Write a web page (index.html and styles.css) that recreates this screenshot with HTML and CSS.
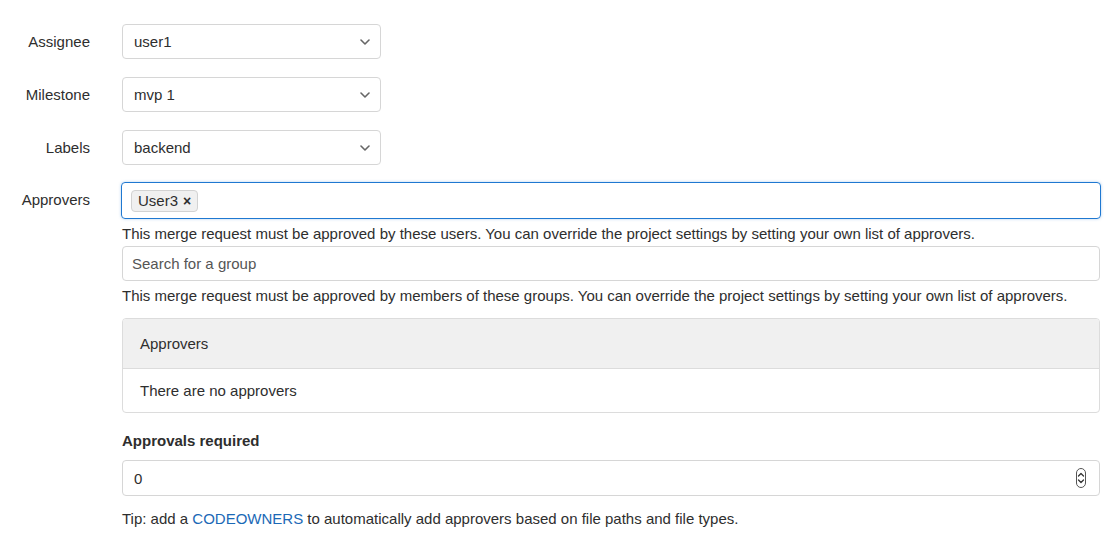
FILE: index.html
```html
<!DOCTYPE html>
<html>
<head>
<meta charset="utf-8">
<link rel="stylesheet" href="styles.css">
</head>
<body>
<div class="form">
  <div class="row">
    <div class="label">Assignee</div>
    <div class="select"><span>user1</span><svg class="chev" width="10" height="6" viewBox="0 0 10 6"><path d="M1 1l4 4 4-4" fill="none" stroke="#666" stroke-width="1.6" stroke-linecap="round" stroke-linejoin="round"/></svg></div>
  </div>
  <div class="row">
    <div class="label">Milestone</div>
    <div class="select"><span>mvp 1</span><svg class="chev" width="10" height="6" viewBox="0 0 10 6"><path d="M1 1l4 4 4-4" fill="none" stroke="#666" stroke-width="1.6" stroke-linecap="round" stroke-linejoin="round"/></svg></div>
  </div>
  <div class="row">
    <div class="label">Labels</div>
    <div class="select"><span>backend</span><svg class="chev" width="10" height="6" viewBox="0 0 10 6"><path d="M1 1l4 4 4-4" fill="none" stroke="#666" stroke-width="1.6" stroke-linecap="round" stroke-linejoin="round"/></svg></div>
  </div>
  <div class="row top">
    <div class="label lab-approvers">Approvers</div>
    <div class="col">
      <div class="token-input"><span class="token">User3 <span class="x">×</span></span></div>
      <p class="help">This merge request must be approved by these users. You can override the project settings by setting your own list of approvers.</p>
      <div class="input placeholder">Search for a group</div>
      <p class="help">This merge request must be approved by members of these groups. You can override the project settings by setting your own list of approvers.</p>
      <div class="panel">
        <div class="panel-head">Approvers</div>
        <div class="panel-body">There are no approvers</div>
      </div>
      <div class="field-label">Approvals required</div>
      <div class="input number"><span>0</span>
        <span class="spinner"><svg width="8" height="16" viewBox="0 0 8 16"><path d="M1.5 6l2.5-2.5L6.5 6M1.5 10l2.5 2.5L6.5 10" fill="none" stroke="#333" stroke-width="1.3" stroke-linecap="round" stroke-linejoin="round"/></svg></span>
      </div>
      <p class="tip">Tip: add a <a class="link">CODEOWNERS</a> to automatically add approvers based on file paths and file types.</p>
    </div>
  </div>
</div>
</body>
</html>
```
FILE: styles.css
```css
html, body {
  margin: 0;
  padding: 0;
  background: #fff;
}
body {
  font-family: "Liberation Sans", Arial, sans-serif;
  font-size: 15px;
  color: #2e2e2e;
}
.form {
  padding: 24px 10px 0 0;
  display: flex;
  flex-direction: column;
  gap: 18px;
}
.row {
  display: grid;
  grid-template-columns: 90px 1fr;
  column-gap: 32px;
  align-items: center;
}
.row.top {
  align-items: start;
  margin-top: -1px;
}
.label {
  text-align: right;
  line-height: 20px;
}
.lab-approvers {
  padding-top: 8px;
}
.select {
  width: 259px;
  height: 35px;
  box-sizing: border-box;
  border: 1px solid #d6d6d6;
  border-radius: 4px;
  display: flex;
  align-items: center;
  justify-content: space-between;
  padding: 0 10px 0 11px;
  background: #fff;
}
.chev {
  display: block;
  margin-top: 1px;
}
.col {
  display: flex;
  flex-direction: column;
}
.token-input {
  height: 37px;
  box-sizing: border-box;
  border: 1px solid #1f78d1;
  border-radius: 4px;
  box-shadow: 0 0 3px rgba(31, 120, 209, 0.35);
  display: flex;
  align-items: center;
  padding: 0 9px;
  margin-left: -1px;
  margin-right: -1px;
}
.token {
  display: inline-flex;
  align-items: center;
  height: 22px;
  box-sizing: border-box;
  padding: 0 6px;
  background: #f0f0f0;
  border: 1px solid #d2d2d2;
  border-radius: 4px;
  color: #2e2e2e;
}
.token .x {
  font-weight: bold;
  margin-left: 5px;
  font-size: 14px;
}
.help {
  margin: 5px 0 2px;
  line-height: 20px;
}
.input {
  height: 35px;
  box-sizing: border-box;
  border: 1px solid #d6d6d6;
  border-radius: 4px;
  display: flex;
  align-items: center;
  padding: 0 9px;
}
.placeholder {
  color: #555;
}
.panel {
  margin-top: 10px;
  border: 1px solid #dcdcdc;
  border-radius: 4px;
  overflow: hidden;
}
.panel-head {
  background: #f0f0f0;
  height: 50px;
  box-sizing: border-box;
  border-bottom: 1px solid #dcdcdc;
  display: flex;
  align-items: center;
  padding: 0 17px;
}
.panel-body {
  height: 43px;
  display: flex;
  align-items: center;
  padding: 0 17px;
}
.field-label {
  margin-top: 18px;
  font-weight: bold;
  line-height: 20px;
}
.number {
  margin-top: 9px;
  height: 36px;
  justify-content: space-between;
  padding: 0 13px 0 11px;
}
.spinner {
  width: 10px;
  height: 20px;
  box-sizing: border-box;
  border: 1px solid #555;
  border-radius: 6px;
  display: flex;
  align-items: center;
  justify-content: center;
}
.spinner svg {
  display: block;
}
.tip {
  margin: 13px 0 0;
  line-height: 20px;
}
.link {
  color: #1b69b6;
  text-decoration: none;
}
```
